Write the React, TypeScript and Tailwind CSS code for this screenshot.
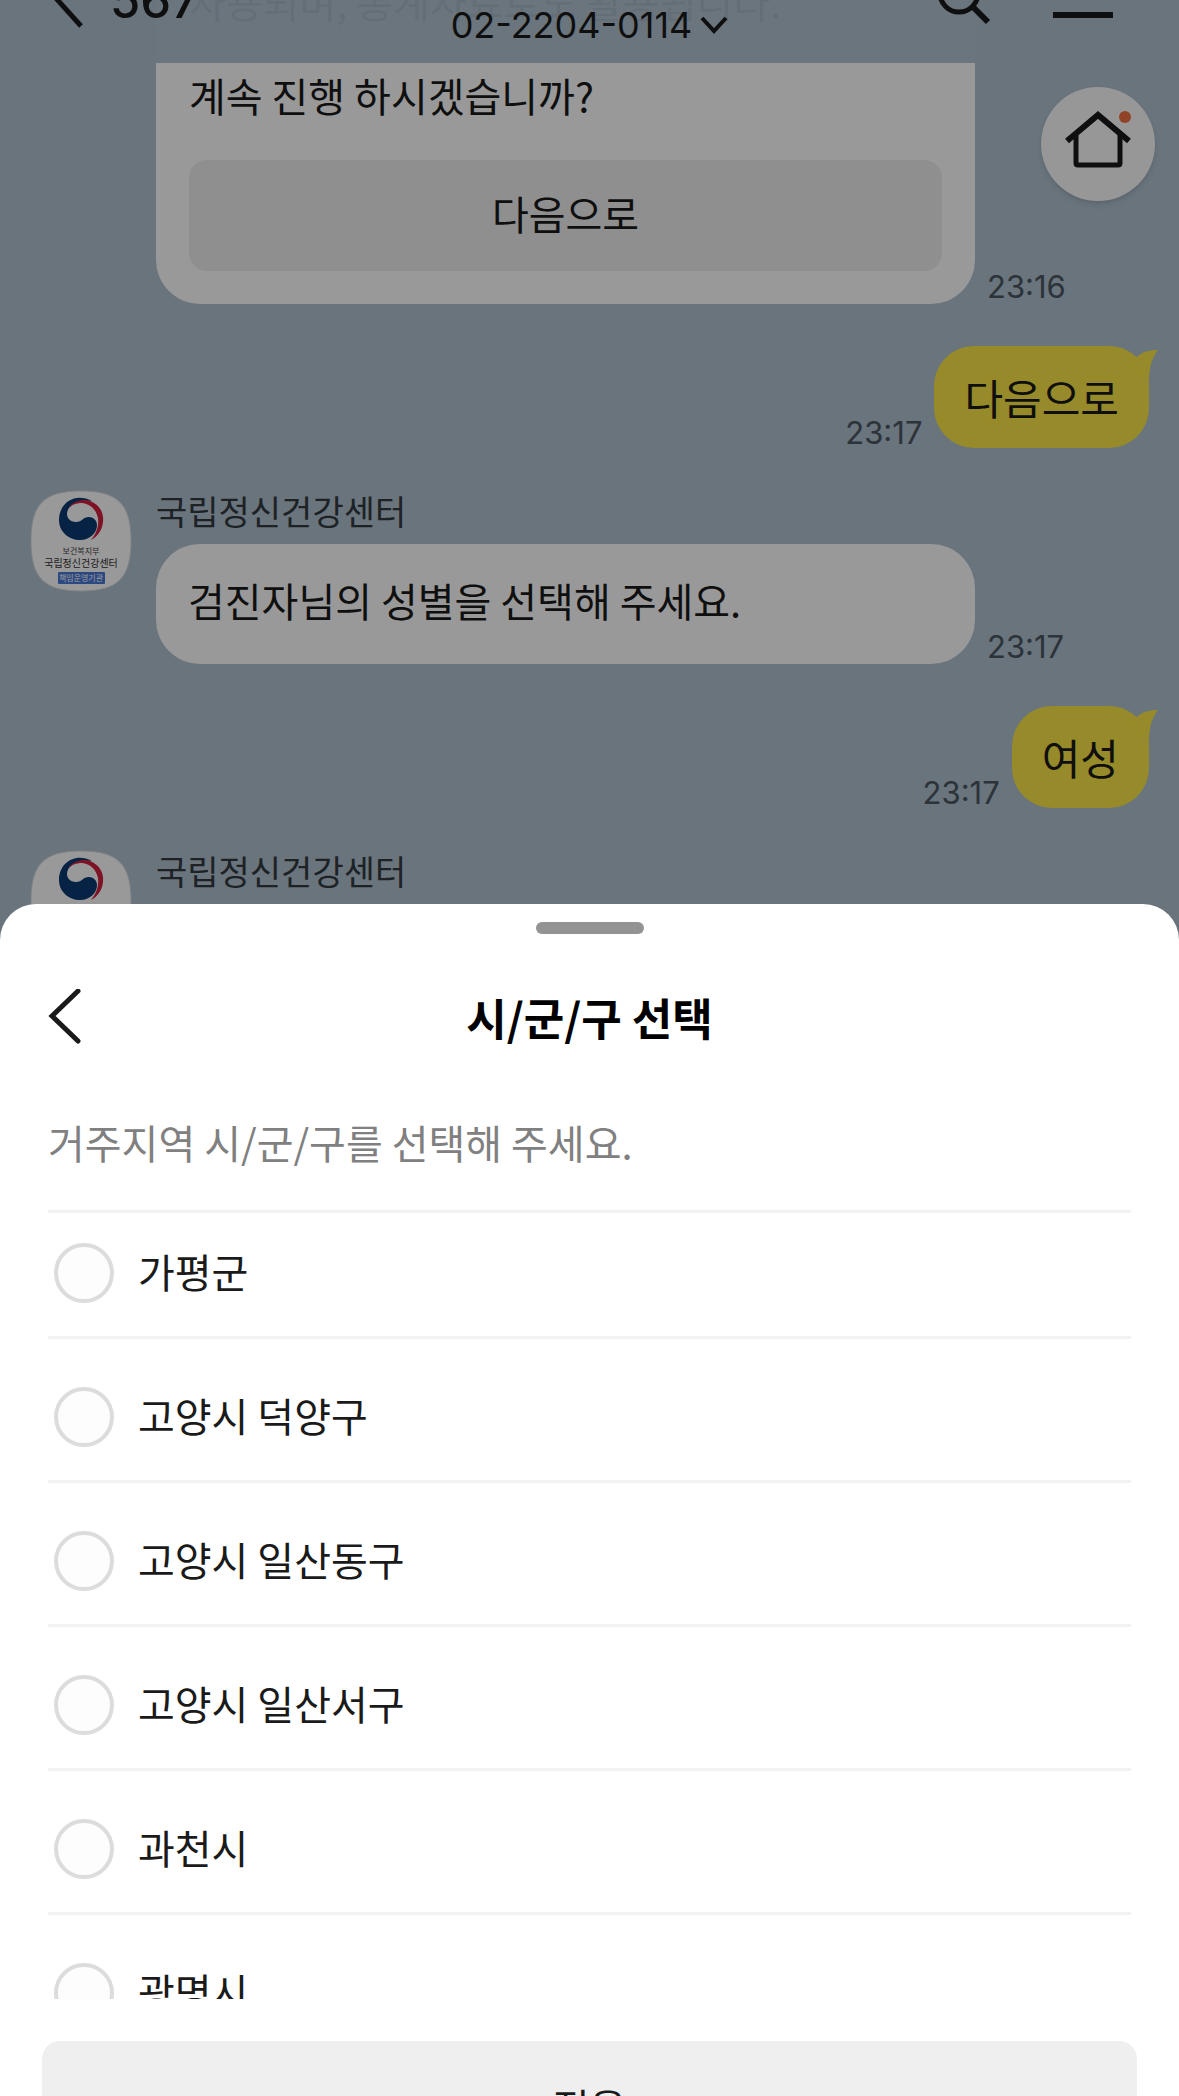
import { useState } from "react";

const REGIONS = [
  "가평군",
  "고양시 덕양구",
  "고양시 일산동구",
  "고양시 일산서구",
  "과천시",
  "광명시",
];

function Avatar() {
  return (
    <svg
      viewBox="0 0 102 102"
      className="size-[102px] shrink-0"
      role="img"
      aria-label="국립정신건강센터"
    >
      <path
        d="M51 1C88 1 101 14 101 51S88 101 51 101 1 88 1 51 14 1 51 1Z"
        fill="#fff"
        stroke="#d5dbe0"
        strokeWidth="1"
      />
      <path
        d="M62 11C45 2 29 13 29 30C29 42 39 50 50 50C60 50 67 43 67 35C67 30 63 27 59 27C53 27 52 32 46 32C40 32 37 28 37 24C37 16 46 9 62 11Z"
        fill="#0b3a72"
      />
      <path
        d="M38 19C41 12 52 8 60 11C70 15 74 23 73 32C72 41 67 47 61 50C67 43 69 35 68 28C66 19 60 14 52 13C46 13 41 15 38 19Z"
        fill="#d0203f"
      />
      <text x="51" y="64" fontSize="8" textAnchor="middle" fill="#444">
        보건복지부
      </text>
      <text x="51" y="77" fontSize="10" textAnchor="middle" fill="#333">
        국립정신건강센터
      </text>
      <rect x="28" y="82" width="47" height="12" rx="1" fill="#4a78d8" />
      <text x="51" y="91" fontSize="8" textAnchor="middle" fill="#fff">
        책임운영기관
      </text>
    </svg>
  );
}

function Time({ value }: { value: string }) {
  return (
    <time className="font-['Inter',sans-serif] text-[31px] leading-[30px] text-[#4a5560]">
      {value}
    </time>
  );
}

function MyMessage({ text }: { text: string }) {
  return (
    <div className="flex items-end justify-end gap-3 pr-[30px]">
      <Time value="23:17" />
      <div className="relative flex h-[102px] items-center rounded-[40px] bg-[#fae646] px-[30px] text-[42px] leading-none">
        {text}
        <svg
          viewBox="0 0 24 36"
          className="absolute top-1 -right-[9px] h-9 w-6"
          aria-hidden="true"
        >
          <path d="M2 8C7 2 15 0 24 0C18 8 15 16 15 32L0 16Z" fill="#fae646" />
        </svg>
      </div>
    </div>
  );
}

function CenterMessage({ text }: { text: string }) {
  return (
    <div className="flex gap-6 pl-[30px]">
      <Avatar />
      <div className="flex-1">
        <p className="flex h-[54px] items-start text-[34px] leading-[42px] text-[#33393f]">
          국립정신건강센터
        </p>
        <div className="flex items-end gap-3">
          <div className="flex h-[120px] w-[819px] items-center rounded-[44px] bg-white px-8 pb-2 text-[40px]">
            {text}
          </div>
          <div className="flex pb-0.5">
            <Time value="23:17" />
          </div>
        </div>
      </div>
    </div>
  );
}

function ChatHeader() {
  return (
    <header className="relative h-[63px] w-full bg-[#afc1d0]/95 font-['Inter',sans-serif]">
      <div className="flex h-full justify-between pr-16 pl-[54px]">
        <button type="button" aria-label="뒤로" className="flex gap-6">
          <svg viewBox="0 0 32 30" className="h-[30px] w-8" fill="none">
            <path d="M0 -4L27 26" stroke="#1a1a1a" strokeWidth="5" />
          </svg>
          <span className="-mt-[26px] text-[49px] leading-[54px] font-medium text-[#1a1a1a]">
            567
          </span>
        </button>
        <div className="flex gap-[60px]">
          <button type="button" aria-label="검색">
            <svg viewBox="0 0 56 63" className="h-[63px] w-14" fill="none">
              <circle cx="22" cy="-7" r="19" stroke="#1a1a1a" strokeWidth="5" />
              <path d="M35 6L51 22" stroke="#1a1a1a" strokeWidth="6" />
            </svg>
          </button>
          <button type="button" aria-label="메뉴">
            <svg viewBox="0 0 62 63" className="h-[63px] w-[62px]">
              <path d="M0 12H60V18H0Z" fill="#1a1a1a" />
            </svg>
          </button>
        </div>
      </div>
      <button
        type="button"
        className="absolute inset-x-0 top-1 mx-auto flex w-fit items-center gap-2 text-[36px] leading-[42px] text-[#1a1a1a]"
      >
        02-2204-0114
        <svg viewBox="0 0 28 18" className="h-[18px] w-7" fill="none">
          <path d="M2 2L14 15L26 2" stroke="#1a1a1a" strokeWidth="4" />
        </svg>
      </button>
    </header>
  );
}

function HomeButton() {
  return (
    <button
      type="button"
      aria-label="홈"
      className="absolute top-[87px] right-6 size-[114px] rounded-full bg-[#fcfcfc] shadow-md"
    >
      <svg viewBox="0 0 114 114" fill="none">
        <path d="M26 54L57 28L88 54" stroke="#1a1a1a" strokeWidth="6" />
        <path
          d="M35 47V76Q35 78 37 78H77Q79 78 79 76V47"
          stroke="#1a1a1a"
          strokeWidth="5"
        />
        <circle cx="84" cy="30" r="6" fill="#f07040" />
      </svg>
    </button>
  );
}

function Chat() {
  return (
    <main className="absolute inset-0 overflow-hidden bg-[#afc1d0] text-[#1a1a1a]">
      <div className="flex items-end gap-3 pl-[156px]">
        <div className="h-[304px] w-[819px] rounded-b-[44px] bg-white px-[33px]">
          <p className="-mt-[30px] text-[40px] leading-[63px]">
            사용되며, 통계자료로도 활용됩니다.
          </p>
          <p className="mt-7 text-[40px] leading-[68px]">
            계속 진행 하시겠습니까?
          </p>
          <button
            type="button"
            className="mt-[31px] h-[111px] w-full rounded-[18px] bg-[#efefef] pb-1.5 text-[40px]"
          >
            다음으로
          </button>
        </div>
        <div className="flex pb-0.5">
          <Time value="23:16" />
        </div>
      </div>
      <div className="mt-[42px]">
        <MyMessage text="다음으로" />
      </div>
      <div className="mt-[42px]">
        <CenterMessage text="검진자님의 성별을 선택해 주세요." />
      </div>
      <div className="mt-[42px]">
        <MyMessage text="여성" />
      </div>
      <div className="mt-[42px]">
        <CenterMessage text="거주지역을 선택해 주세요." />
      </div>
      <div className="absolute inset-x-0 top-0">
        <ChatHeader />
      </div>
      <HomeButton />
    </main>
  );
}

function RegionSheet() {
  const [region, setRegion] = useState("");

  return (
    <section
      role="dialog"
      aria-labelledby="sheet-title"
      className="flex-1 rounded-t-[36px] bg-white pt-[18px] text-[#1a1a1a]"
    >
      <div className="mx-auto h-3 w-[108px] rounded-full bg-[#939393]" />
      <div className="mt-10 grid h-[86px] grid-cols-[1fr_auto_1fr] items-center px-12">
        <button type="button" aria-label="이전">
          <svg viewBox="0 0 36 56" className="h-14 w-9" fill="none">
            <path
              d="M30 2L4 27L30 52"
              stroke="#1a1a1a"
              strokeWidth="5"
              strokeLinecap="round"
            />
          </svg>
        </button>
        <h1 id="sheet-title" className="text-[44px] font-bold text-black">
          시/군/구 선택
        </h1>
      </div>
      <p className="mt-[52px] px-12 text-[40px] leading-[60px] text-[#808080]">
        거주지역 시/군/구를 선택해 주세요.
      </p>
      <div className="mx-12 mt-[38px] h-[789px] overflow-hidden border-t-3 border-[#f2f2f2]">
        {REGIONS.map((name) => (
          <label
            key={name}
            className="flex items-center gap-6 border-b-3 border-[#f2f2f2] px-[6px] pt-12 pb-[33px] first:pt-[30px]"
          >
            <input
              type="radio"
              name="region"
              value={name}
              checked={region === name}
              onChange={() => setRegion(name)}
              className="size-[60px] appearance-none rounded-full border-4 border-[#dcdcdc] bg-[#fdfdfd] checked:border-[16px] checked:border-[#1a1a1a]"
            />
            <span className="pb-1 text-[40px] leading-[56px]">{name}</span>
          </label>
        ))}
      </div>
      <div className="mt-[42px] px-[42px]">
        <button
          type="button"
          className="h-[138px] w-full rounded-[18px] bg-[#efefef] pb-2 text-[40px]"
        >
          적용
        </button>
      </div>
    </section>
  );
}

export default function App() {
  return (
    <div className="relative h-screen overflow-hidden font-['Noto_Sans_CJK_KR',sans-serif]">
      <Chat />
      {/* dimmed backdrop with the bottom sheet */}
      <div className="relative flex h-full flex-col bg-black/40 pt-[904px]">
        <RegionSheet />
      </div>
    </div>
  );
}
